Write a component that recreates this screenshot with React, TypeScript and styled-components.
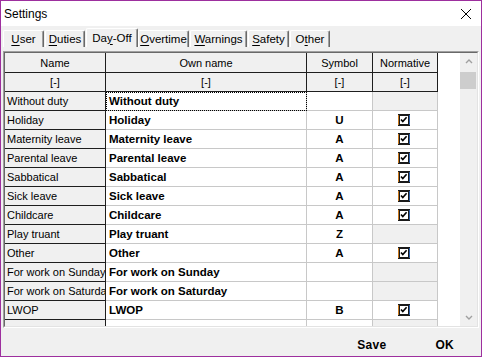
import React from "react";
import styled, { createGlobalStyle } from "styled-components";

const GlobalStyle = createGlobalStyle`
  html, body {
    margin: 0;
    padding: 0;
    background: #f0f0f0;
  }
  * {
    box-sizing: border-box;
  }
`;

const Window = styled.div`
  width: 482px;
  height: 357px;
  border: 1px solid #9d2f9e;
  background: #f0f0f0;
  display: flex;
  flex-direction: column;
  font-family: "Liberation Sans", Arial, sans-serif;
  color: #000;
  overflow: hidden;
`;

const TitleBar = styled.div`
  height: 25px;
  flex: none;
  background: #fff;
  display: flex;
  align-items: center;
  justify-content: space-between;
  padding: 0 9px 0 3px;
  font-size: 12px;
`;

const Body = styled.div`
  flex: 1;
  display: flex;
  flex-direction: column;
  padding: 2px 2px 0 2px;
  min-height: 0;
`;

const TabStrip = styled.div`
  height: 19px;
  display: flex;
  align-items: flex-end;
`;

const Tab = styled.div<{ w: number; active?: boolean }>`
  width: ${({ w }) => w}px;
  height: ${({ active }) => (active ? 19 : 17)}px;
  margin-right: ${({ active }) => (active ? 0 : 1)}px;
  border-top: 1px solid #fff;
  border-left: 1px solid #fff;
  border-right: 1px solid #696969;
  border-radius: 2px 2px 0 0;
  box-shadow: inset -1px 0 0 #a0a0a0;
  background: #f0f0f0;
  font-size: 11.5px;
  display: flex;
  align-items: center;
  justify-content: center;
  padding-bottom: ${({ active }) => (active ? 1 : 0)}px;
  position: relative;
  z-index: ${({ active }) => (active ? 1 : 0)};

  u {
    text-decoration-thickness: 1px;
    text-underline-offset: 2px;
  }
`;

const GridFrame = styled.div`
  margin-top: 4px;
  height: 277px;
  border: 1px solid;
  border-color: #a0a0a0 #fff #fff #a0a0a0;
  flex: none;
`;

const GridInner = styled.div`
  height: 100%;
  border: 1px solid;
  border-color: #696969 #e3e3e3 #e3e3e3 #696969;
  display: flex;
  background: #fff;
  overflow: hidden;
`;

const Table = styled.div`
  flex: 1;
  overflow: hidden;
  background: #fff;
`;

const Row = styled.div<{ h?: number }>`
  display: grid;
  grid-template-columns: 101px 201px 66px 65px;
  height: ${({ h }) => h ?? 19}px;
`;

const HeadCell = styled.div`
  background: #f0f0f0;
  border-right: 1px solid #1e1e1e;
  border-bottom: 1px solid #1e1e1e;
  font-size: 11px;
  display: flex;
  align-items: center;
  justify-content: center;
`;

const NameCell = styled.div`
  background: #f0f0f0;
  border-right: 1px solid #1e1e1e;
  border-bottom: 1px solid #1e1e1e;
  font-size: 11px;
  display: flex;
  align-items: center;
  padding: 0 0 1px 2px;
  white-space: nowrap;
  overflow: hidden;
`;

const OwnCell = styled.div<{ focused?: boolean }>`
  background: #fff;
  border-right: 1px solid #c8c8c8;
  border-bottom: 1px solid #c8c8c8;
  font-size: 11.5px;
  font-weight: bold;
  display: flex;
  align-items: center;
  padding: 0 0 1px 3px;
  white-space: nowrap;
  overflow: hidden;
  outline: ${({ focused }) => (focused ? "1px dotted #000" : "none")};
  outline-offset: -1px;
`;

const SymbolCell = styled.div`
  background: #fff;
  border-right: 1px solid #c8c8c8;
  border-bottom: 1px solid #c8c8c8;
  font-size: 11.5px;
  font-weight: bold;
  display: flex;
  align-items: center;
  justify-content: center;
  padding-bottom: 1px;
`;

const NormCell = styled.div<{ on: boolean }>`
  background: ${({ on }) => (on ? "#fff" : "#f0f0f0")};
  border-right: 1px solid #c8c8c8;
  border-bottom: 1px solid #c8c8c8;
  display: flex;
  align-items: center;
  justify-content: center;
  padding: 0 3px 1px 0;
`;

const ScrollBar = styled.div`
  width: 17px;
  flex: none;
  background: #f0f0f0;
  display: flex;
  flex-direction: column;
`;

const ScrollButton = styled.div`
  height: 17px;
  display: flex;
  align-items: center;
  justify-content: center;
  color: #a0a0a0;
`;

const ScrollTrack = styled.div`
  flex: 1;
  padding-top: 2px;
`;

const Thumb = styled.div`
  height: 17px;
  margin: 0 1px 0 0;
  background: #cdcdcd;
`;

const Footer = styled.div`
  flex: 1;
  display: flex;
  align-items: center;
  justify-content: flex-end;
  padding: 5px 25px 0 0;
  gap: 49px;
`;

const FooterButton = styled.span`
  font-size: 12px;
  font-weight: bold;
  letter-spacing: 0.3px;
`;

const CheckBox = () => (
  <svg width="12" height="12" viewBox="0 0 12 12">
    <rect x="0" y="0" width="12" height="12" fill="#1a1a1a" />
    <rect x="0" y="1" width="1" height="10" fill="#c7761a" />
    <rect x="11" y="1" width="1" height="10" fill="#2a5ea8" />
    <rect x="2" y="2" width="8" height="8" fill="#fff" />
    <path d="M3 5.5 L4.8 7.6 L8.6 3.2" fill="none" stroke="#000" strokeWidth="1.6" />
  </svg>
);

const CloseIcon = () => (
  <svg width="12" height="12" viewBox="0 0 12 12">
    <path d="M1 1 L11 11 M11 1 L1 11" stroke="#000" strokeWidth="1" fill="none" />
  </svg>
);

const Chevron = ({ down }: { down?: boolean }) => (
  <svg width="8" height="5" viewBox="0 0 8 5">
    <path
      d={down ? "M1 1 L4 4 L7 1" : "M1 4 L4 1 L7 4"}
      stroke="currentColor"
      strokeWidth="1.4"
      fill="none"
    />
  </svg>
);

type DayOff = { name: string; own: string; symbol: string; normative: boolean };

const rows: DayOff[] = [
  { name: "Without duty", own: "Without duty", symbol: "", normative: false },
  { name: "Holiday", own: "Holiday", symbol: "U", normative: true },
  { name: "Maternity leave", own: "Maternity leave", symbol: "A", normative: true },
  { name: "Parental leave", own: "Parental leave", symbol: "A", normative: true },
  { name: "Sabbatical", own: "Sabbatical", symbol: "A", normative: true },
  { name: "Sick leave", own: "Sick leave", symbol: "A", normative: true },
  { name: "Childcare", own: "Childcare", symbol: "A", normative: true },
  { name: "Play truant", own: "Play truant", symbol: "Z", normative: false },
  { name: "Other", own: "Other", symbol: "A", normative: true },
  { name: "For work on Sunday", own: "For work on Sunday", symbol: "", normative: false },
  { name: "For work on Saturday", own: "For work on Saturday", symbol: "", normative: false },
  { name: "LWOP", own: "LWOP", symbol: "B", normative: true },
  { name: "", own: "", symbol: "", normative: false },
];

const App: React.FC = () => {
  return (
    <>
      <GlobalStyle />
      <Window>
        <TitleBar>
          <span>Settings</span>
          <CloseIcon />
        </TitleBar>
        <Body>
          <TabStrip>
            <Tab w={41}><span><u>U</u>ser</span></Tab>
            <Tab w={40}><span><u>D</u>uties</span></Tab>
            <Tab w={52} active><span>Da<u>y</u>-Off</span></Tab>
            <Tab w={51}><span><u>O</u>vertime</span></Tab>
            <Tab w={57}><span><u>W</u>arnings</span></Tab>
            <Tab w={41}><span><u>S</u>afety</span></Tab>
            <Tab w={40}><span>O<u>t</u>her</span></Tab>
          </TabStrip>
          <GridFrame>
            <GridInner>
              <Table>
                <Row h={20}>
                  <HeadCell>Name</HeadCell>
                  <HeadCell>Own name</HeadCell>
                  <HeadCell>Symbol</HeadCell>
                  <HeadCell>Normative</HeadCell>
                </Row>
                <Row>
                  <HeadCell>[-]</HeadCell>
                  <HeadCell>[-]</HeadCell>
                  <HeadCell>[-]</HeadCell>
                  <HeadCell>[-]</HeadCell>
                </Row>
                {rows.map((r, i) => (
                  <Row key={i}>
                    <NameCell>{r.name}</NameCell>
                    <OwnCell focused={i === 0}>{r.own}</OwnCell>
                    <SymbolCell>{r.symbol}</SymbolCell>
                    <NormCell on={r.normative}>{r.normative && <CheckBox />}</NormCell>
                  </Row>
                ))}
              </Table>
              <ScrollBar>
                <ScrollButton><Chevron /></ScrollButton>
                <ScrollTrack>
                  <Thumb />
                </ScrollTrack>
                <ScrollButton><Chevron down /></ScrollButton>
              </ScrollBar>
            </GridInner>
          </GridFrame>
          <Footer>
            <FooterButton>Save</FooterButton>
            <FooterButton>OK</FooterButton>
          </Footer>
        </Body>
      </Window>
    </>
  );
};

export default App;
